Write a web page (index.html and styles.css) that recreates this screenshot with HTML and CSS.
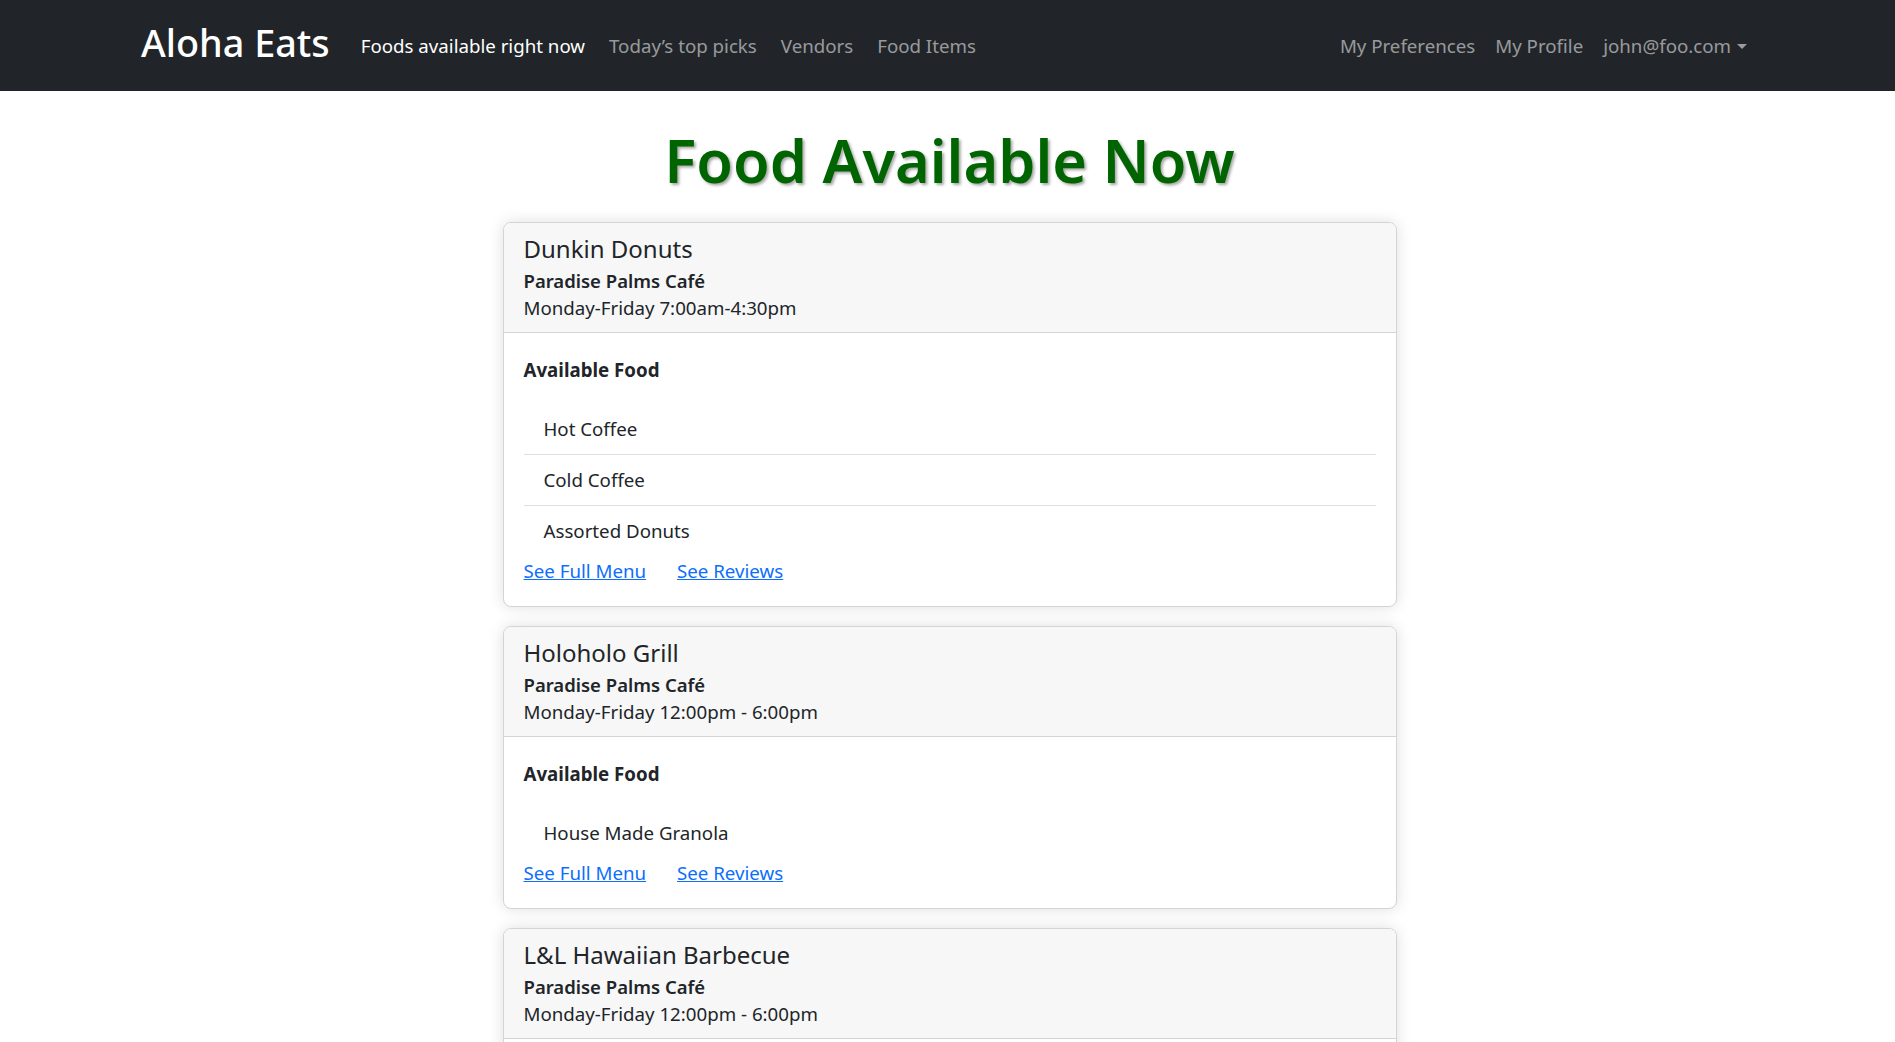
FILE: index.html
```html
<!DOCTYPE html>
<html lang="en">
<head>
<meta charset="utf-8">
<title>Aloha Eats</title>
<link rel="stylesheet" href="styles.css">
</head>
<body>
<nav class="navbar">
  <a class="brand" href="#">Aloha Eats</a>
  <ul class="nav nav-left">
    <li><a class="nav-link active" href="#">Foods available right now</a></li>
    <li><a class="nav-link" href="#">Today’s top picks</a></li>
    <li><a class="nav-link" href="#">Vendors</a></li>
    <li><a class="nav-link" href="#">Food Items</a></li>
  </ul>
  <ul class="nav nav-right">
    <li><a class="nav-link" href="#">My Preferences</a></li>
    <li><a class="nav-link" href="#">My Profile</a></li>
    <li><a class="nav-link dropdown-toggle" href="#">john@foo.com</a></li>
  </ul>
</nav>

<main class="page">
  <h1 class="page-title">Food Available Now</h1>

  <section class="card">
    <header class="card-header">
      <h5 class="card-title">Dunkin Donuts</h5>
      <h6 class="card-subtitle">Paradise Palms Café</h6>
      <p class="card-hours">Monday-Friday 7:00am-4:30pm</p>
    </header>
    <div class="card-body">
      <p class="section-label">Available Food</p>
      <ul class="food-list">
        <li>Hot Coffee</li>
        <li>Cold Coffee</li>
        <li>Assorted Donuts</li>
      </ul>
      <div class="card-links">
        <a href="#">See Full Menu</a>
        <a href="#">See Reviews</a>
      </div>
    </div>
  </section>

  <section class="card">
    <header class="card-header">
      <h5 class="card-title">Holoholo Grill</h5>
      <h6 class="card-subtitle">Paradise Palms Café</h6>
      <p class="card-hours">Monday-Friday 12:00pm - 6:00pm</p>
    </header>
    <div class="card-body">
      <p class="section-label">Available Food</p>
      <ul class="food-list">
        <li>House Made Granola</li>
      </ul>
      <div class="card-links">
        <a href="#">See Full Menu</a>
        <a href="#">See Reviews</a>
      </div>
    </div>
  </section>

  <section class="card">
    <header class="card-header">
      <h5 class="card-title">L&amp;L Hawaiian Barbecue</h5>
      <h6 class="card-subtitle">Paradise Palms Café</h6>
      <p class="card-hours">Monday-Friday 12:00pm - 6:00pm</p>
    </header>
    <div class="card-body">
      <p class="section-label">Available Food</p>
      <ul class="food-list">
        <li>Plate Lunch</li>
      </ul>
      <div class="card-links">
        <a href="#">See Full Menu</a>
        <a href="#">See Reviews</a>
      </div>
    </div>
  </section>
</main>
</body>
</html>
```

FILE: styles.css
```css
* {
  box-sizing: border-box;
}

body {
  margin: 0;
  font-family: "Noto Sans", "Open Sans", sans-serif;
  font-size: 18.7px;
  line-height: 30px;
  color: #212529;
  background: #ffffff;
}

a {
  text-decoration: none;
}

/* ---------- Navbar ---------- */
.navbar {
  height: 91px;
  background: #212529;
  display: flex;
  align-items: center;
  padding: 0 138px 0 141px;
}

.brand {
  color: #ffffff;
  font-size: 37.8px;
  line-height: 60px;
  font-weight: 500;
  margin-right: 19px;
  margin-bottom: 5px;
  white-space: nowrap;
}

.nav {
  list-style: none;
  margin: 0;
  padding: 0;
  display: flex;
  align-items: center;
}

.nav-left .nav-link {
  padding: 0 12px;
}

.nav-right {
  margin-left: auto;
}

.nav-link {
  display: block;
  padding: 0 10px;
  line-height: 30px;
  margin-top: 1px;
  color: rgba(255, 255, 255, 0.55);
  white-space: nowrap;
}

.nav-link.active {
  color: #ffffff;
}

.dropdown-toggle::after {
  content: "";
  display: inline-block;
  margin-left: 6px;
  vertical-align: 4px;
  border-top: 5px solid rgba(255, 255, 255, 0.55);
  border-left: 5px solid transparent;
  border-right: 5px solid transparent;
}

/* ---------- Page ---------- */
.page {
  width: 894px;
  margin: 0 auto;
  position: relative;
  left: 2px;
}

.page-title {
  margin: 31px 0 24px;
  text-align: center;
  font-size: 59.5px;
  line-height: 76px;
  font-weight: 600;
  color: #006400;
  text-shadow: 2px 2px 3px rgba(0, 0, 0, 0.35);
}

/* ---------- Cards ---------- */
.card {
  background: #ffffff;
  border: 1px solid #d3d4d5;
  border-radius: 8px;
  box-shadow: 0 0 15px rgba(0, 0, 0, 0.13);
  margin-bottom: 19px;
  overflow: hidden;
}

.card-header {
  background: #f7f7f7;
  padding: 11px 20px 9px;
  border-bottom: 1px solid #d3d4d5;
}

.card-title {
  margin: 0 0 5px;
  font-size: 24px;
  line-height: 30px;
  font-weight: 400;
}

.card-subtitle {
  margin: 0;
  font-size: 18.5px;
  line-height: 24px;
  font-weight: 600;
}

.card-hours {
  margin: 0;
}

.card-body {
  padding: 22px 20px 20px;
}

.section-label {
  margin: 0 0 19px;
  font-weight: 700;
}

.food-list {
  list-style: none;
  margin: 0;
  padding: 0;
}

.food-list li {
  padding: 10px 20px;
  border-bottom: 1px solid #dfdfdf;
}

.food-list li:last-child {
  border-bottom: none;
}

.card-links {
  display: flex;
  gap: 31px;
}

.card-links a {
  color: #0d6efd;
  text-decoration: underline;
}
```
